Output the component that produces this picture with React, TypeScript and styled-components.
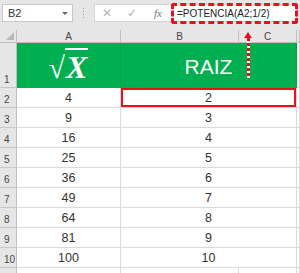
import { Fragment } from "react";
import styled, { createGlobalStyle } from "styled-components";

const GlobalStyle = createGlobalStyle`
  html, body {
    margin: 0;
    padding: 0;
    background: #ffffff;
    font-family: "Liberation Sans", Arial, sans-serif;
  }
`;

const Wrapper = styled.div`
  position: relative;
  width: 300px;
  height: 273px;
  overflow: hidden;
  background: #ffffff;
`;

const Toolbar = styled.div`
  height: 30px;
  box-sizing: border-box;
  background: #e6e6e6;
  display: flex;
  align-items: flex-start;
  padding: 4px 3px 0 2px;
`;

const NameBox = styled.div`
  width: 71px;
  height: 18px;
  box-sizing: border-box;
  background: #fff;
  border: 1px solid #c6c6c6;
  display: flex;
  align-items: center;
  justify-content: space-between;
  padding: 0 4px 0 5px;
  font-size: 11px;
  color: #333;
`;

const Caret = styled.span`
  width: 0;
  height: 0;
  border-left: 3px solid transparent;
  border-right: 3px solid transparent;
  border-top: 3px solid #666;
`;

const Grip = styled.div`
  width: 21px;
  height: 18px;
  display: flex;
  justify-content: center;
  align-items: center;
  &::before {
    content: "";
    width: 1px;
    height: 10px;
    background: repeating-linear-gradient(#9a9a9a 0 1px, transparent 1px 3px);
  }
`;

const FormulaBar = styled.div`
  flex: 1;
  height: 18px;
  box-sizing: border-box;
  background: #fff;
  border: 1px solid #d4d4d4;
  display: flex;
  align-items: center;
`;

const BarIcon = styled.span<{ w: number }>`
  width: ${(p) => p.w}px;
  display: flex;
  justify-content: center;
  color: #b4b4b4;
  font-size: 12px;
`;

const Fx = styled.span`
  width: 26px;
  text-align: center;
  font-family: "Liberation Serif", serif;
  font-style: italic;
  font-size: 11px;
  color: #777;
`;

const Formula = styled.div`
  flex: 1;
  align-self: stretch;
  margin: -2px -2px -3px 0;
  border: 3px dashed #e8101c;
  border-radius: 3px;
  display: flex;
  align-items: center;
  padding-left: 3px;
  font-size: 10px;
  color: #222;
`;

const Sheet = styled.div`
  display: grid;
  grid-template-columns: 17px 104px 118px 58px 3px;
  grid-template-rows: 13px 45px repeat(9, 20px) 20px;
`;

const ColHead = styled.div`
  background: #e6e6e6;
  border-right: 1px solid #bfbfbf;
  border-bottom: 1px solid #bfbfbf;
  box-sizing: border-box;
  font-size: 10px;
  color: #444;
  display: flex;
  align-items: center;
  justify-content: center;
`;

const Corner = styled(ColHead)`
  position: relative;
  &::after {
    content: "";
    position: absolute;
    right: 2px;
    bottom: 2px;
    border-left: 8px solid transparent;
    border-bottom: 8px solid #b9b9b9;
  }
`;

const RowHead = styled.div`
  background: #e6e6e6;
  border-right: 1px solid #bfbfbf;
  border-bottom: 1px solid #c8c8c8;
  box-sizing: border-box;
  font-size: 10px;
  color: #444;
  display: flex;
  align-items: flex-end;
  padding: 0 0 2px 4px;
`;

const Header = styled.div<{ span?: number }>`
  grid-column: span ${(p) => p.span || 1};
  background: #00b050;
  border-right: 1px solid #0a9d4a;
  box-sizing: border-box;
  color: #fff;
  display: flex;
  align-items: center;
  justify-content: center;
`;

const Sqrt = styled.span`
  font-family: "Liberation Serif", serif;
  font-size: 30px;
  display: flex;
  align-items: flex-end;
  line-height: 1;
`;

const Radicand = styled.span`
  font-style: italic;
  font-weight: bold;
  border-top: 2px solid #fff;
  padding: 1px 1px 0 1px;
  font-size: 32px;
`;

const Raiz = styled.span`
  font-size: 21px;
  padding-top: 3px;
`;

const Cell = styled.div<{ span?: number; selected?: boolean }>`
  grid-column: span ${(p) => p.span || 1};
  border-right: 1px solid #dadada;
  border-bottom: 1px solid #dadada;
  box-sizing: border-box;
  font-size: 12.5px;
  color: #333;
  display: flex;
  align-items: flex-end;
  justify-content: center;
  padding-bottom: 2px;
  box-shadow: ${(p) => (p.selected ? "inset 0 0 0 2px #e8101c" : "none")};
`;

const Arrow = styled.div`
  position: absolute;
  left: 244px;
  top: 32px;
  width: 8px;
  height: 46px;
  display: flex;
  flex-direction: column;
  align-items: center;
  &::before {
    content: "";
    border-left: 4px solid transparent;
    border-right: 4px solid transparent;
    border-bottom: 6px solid #e8101c;
  }
  &::after {
    content: "";
    flex: 1;
    width: 3px;
    background: repeating-linear-gradient(#e8101c 0 3px, #ffffff 3px 5px);
  }
`;

const values = [4, 9, 16, 25, 36, 49, 64, 81, 100];

function App() {
  return (
    <Wrapper>
      <GlobalStyle />
      <Toolbar>
        <NameBox>
          B2
          <Caret />
        </NameBox>
        <Grip />
        <FormulaBar>
          <BarIcon w={24}>✕</BarIcon>
          <BarIcon w={26}>✓</BarIcon>
          <Fx>fx</Fx>
          <Formula>=POTENCIA(A2;1/2)</Formula>
        </FormulaBar>
      </Toolbar>
      <Sheet>
        <Corner />
        <ColHead>A</ColHead>
        <ColHead>B</ColHead>
        <ColHead>C</ColHead>
        <ColHead />

        <RowHead>1</RowHead>
        <Header>
          <Sqrt>
            √<Radicand>X</Radicand>
          </Sqrt>
        </Header>
        <Header span={2}>
          <Raiz>RAIZ</Raiz>
        </Header>
        <Cell />

        {values.map((v, i) => (
          <Fragment key={v}>
            <RowHead>{i + 2}</RowHead>
            <Cell>{v}</Cell>
            <Cell span={2} selected={i === 0}>
              {Math.sqrt(v)}
            </Cell>
            <Cell />
          </Fragment>
        ))}

        <RowHead>11</RowHead>
        <Cell />
        <Cell />
        <Cell />
        <Cell />
      </Sheet>
      <Arrow />
    </Wrapper>
  );
}

export default App;
